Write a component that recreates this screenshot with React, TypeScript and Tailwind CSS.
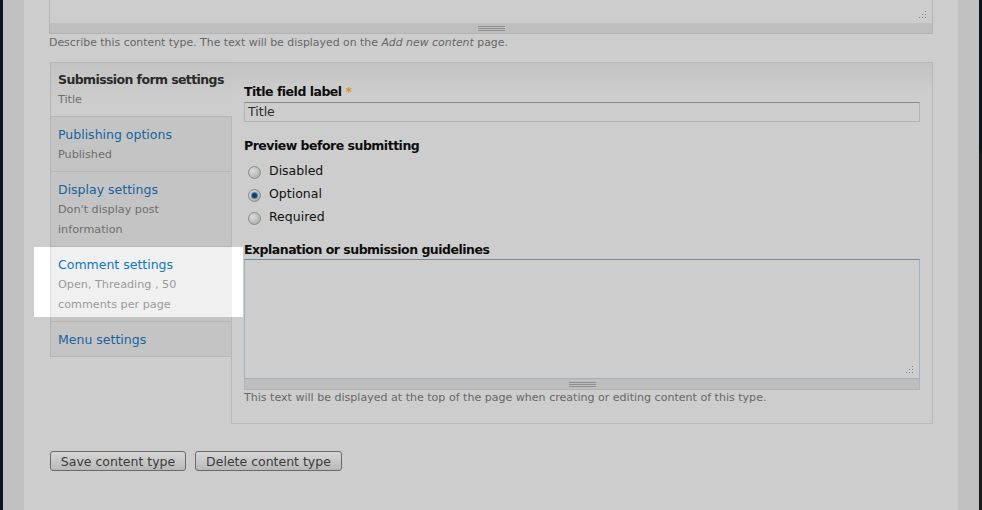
import React from 'react';

type Tab = {
  title: string;
  summary?: string[];
  selected?: boolean;
  highlight?: boolean;
};

const tabs: Tab[] = [
  { title: 'Submission form settings', summary: ['Title'], selected: true },
  { title: 'Publishing options', summary: ['Published'] },
  { title: 'Display settings', summary: ["Don't display post", 'information'] },
  { title: 'Comment settings', summary: ['Open, Threading , 50', 'comments per page'], highlight: true },
  { title: 'Menu settings' },
];

const ResizeDots = () => (
  <svg width="9" height="9" viewBox="0 0 9 9" className="absolute right-[5px] bottom-[4px]">
    {[
      [7, 1],
      [4, 4],
      [7, 4],
      [1, 7],
      [4, 7],
      [7, 7],
    ].map(([x, y]) => (
      <rect key={`${x}-${y}`} x={x} y={y} width="1" height="1" fill="#7c7c7c" />
    ))}
  </svg>
);

const Grippie = () => (
  <div className="flex h-[11px] items-center justify-center border border-t-0 border-[#b3b3b3] bg-[#bebebe]">
    <div className="flex w-[27px] flex-col gap-px">
      <div className="h-px bg-[#8f8f8f]" />
      <div className="h-px bg-[#8f8f8f]" />
      <div className="h-px bg-[#8f8f8f]" />
    </div>
  </div>
);

const Radio = ({ checked }: { checked?: boolean }) => (
  <span className="mt-[4px] flex h-[13px] w-[13px] items-center justify-center rounded-full border border-[#8a8a8a] bg-[radial-gradient(circle_at_35%_35%,#dcdcdc,#a3a3a3)]">
    {checked && <span className="h-[5px] w-[5px] rounded-full bg-[#0f3d63] shadow-[0_0_0_1px_#5a86ab]" />}
  </span>
);

const Label = ({ children }: { children: React.ReactNode }) => (
  <div className="text-[12.5px] font-bold leading-[16px] tracking-[-0.5px] text-[#0d0d0d]">{children}</div>
);

const TabBody = ({ tab }: { tab: Tab }) => (
  <>
    <div
      className={
        tab.selected
          ? 'text-[12.5px] font-bold leading-[20px] tracking-[-0.6px] text-[#2a2a2a]'
          : tab.highlight
            ? 'text-[12.5px] leading-[20px] text-[#0a77c4]'
            : 'text-[12.5px] leading-[20px] text-[#1463a3]'
      }
    >
      {tab.title}
    </div>
    {tab.summary?.map((line) => (
      <div
        key={line}
        className={`text-[11.2px] leading-[20px] ${tab.highlight ? 'text-[#9a9a9a]' : 'text-[#6e6e6e]'}`}
      >
        {line}
      </div>
    ))}
  </>
);

export default function App() {
  return (
    <div className="flex h-[510px] w-[982px] overflow-hidden font-['DejaVu_Sans',Verdana,sans-serif]">
      <div className="w-[3px] bg-[#0b1620]" />
      <div className="w-[21px] bg-[#c1c1c1]" />

      <div className="w-[934px] bg-[#cdcdcd] px-[25px]">
        {/* bottom of the description textarea */}
        <div className="relative h-[23px] border-x border-[#b4b4b4]">
          <ResizeDots />
        </div>
        <Grippie />
        <p className="pt-px text-[10.9px] leading-[15px] text-[#676767]">
          Describe this content type. The text will be displayed on the <em>Add new content</em> page.
        </p>

        {/* vertical tabs */}
        <div className="mt-[12px] ml-px flex items-start">
          <ul className="w-[181px] shrink-0 border-t border-[#b6b6b6]">
            {tabs.map((tab) => {
              if (tab.highlight) {
                return (
                  <li key={tab.title} className="border-b border-[#b5b5b5]">
                    <div className="relative z-10 -mr-[12px] -ml-[16px] bg-white pr-[11px] pl-[16px]">
                      <div className="border-l border-[#e2e2e2] bg-[#f0f0f0] pt-[8px] pb-[2px] pl-[7px]">
                        <TabBody tab={tab} />
                      </div>
                    </div>
                    <div className="h-[4px] border-l border-[#b5b5b5] bg-[#c4c4c4]" />
                  </li>
                );
              }
              if (tab.selected) {
                return (
                  <li
                    key={tab.title}
                    className="relative z-[1] -mr-px border-b border-l border-[#b5b5b5] bg-[linear-gradient(#c3c3c3,#cbcbcb_30px,#cdcdcd)] pt-[7px] pb-[6px] pl-[7px]"
                  >
                    <TabBody tab={tab} />
                  </li>
                );
              }
              return (
                <li key={tab.title} className="border-b border-l border-[#b5b5b5] bg-[#c4c4c4] pt-[8px] pb-[6px] pl-[7px]">
                  <TabBody tab={tab} />
                </li>
              );
            })}
          </ul>

          <div className="flex-1 border border-[#b8b8b8] bg-[linear-gradient(#c3c3c3,#cdcdcd_30px)] pt-[21px] pr-[12px] pb-[18px] pl-[12px]">
            <Label>
              Title field label <span className="text-[#d9951c]">*</span>
            </Label>
            <div className="mt-[2px] flex h-[20px] items-center border border-[#b2b2b2] border-t-[#8b8b8b] pt-px pl-[3px] text-[12.5px] text-[#2e2e2e]">
              Title
            </div>

            <div className="mt-[16px]">
              <Label>Preview before submitting</Label>
            </div>
            <div className="mt-[5px]">
              {['Disabled', 'Optional', 'Required'].map((opt) => (
                <div key={opt} className="flex h-[23px] items-center pl-[4px]">
                  <Radio checked={opt === 'Optional'} />
                  <span className="mt-px ml-[8px] text-[12.5px] text-[#111]">{opt}</span>
                </div>
              ))}
            </div>

            <div className="mt-[14px]">
              <Label>Explanation or submission guidelines</Label>
            </div>
            <div className="relative mt-[1px] h-[120px] border border-[#9fb1c2] border-t-[#6f8aa3]">
              <ResizeDots />
            </div>
            <Grippie />
            <p className="pt-px text-[11.05px] leading-[14px] text-[#676767]">
              This text will be displayed at the top of the page when creating or editing content of this type.
            </p>
          </div>
        </div>

        <div className="mt-[27px] ml-px flex gap-[9px]">
          <button className="h-[20px] w-[136px] rounded-[3px] border border-[#6a6a6a] bg-[linear-gradient(#d6d6d6,#c8c8c8_50%,#b8b8b8)] pt-px text-[12.5px] leading-[18px] text-[#3a3a3a]">
            Save content type
          </button>
          <button className="h-[20px] w-[147px] rounded-[3px] border border-[#6a6a6a] bg-[linear-gradient(#d6d6d6,#c8c8c8_50%,#b8b8b8)] pt-px text-[12.5px] leading-[18px] text-[#3a3a3a]">
            Delete content type
          </button>
        </div>
      </div>

      <div className="w-[21px] bg-[#c1c1c1]" />
      <div className="w-[3px] bg-[linear-gradient(#0a141c_0,#0a141c_150px,#1c1c1c_155px)]" />
    </div>
  );
}
